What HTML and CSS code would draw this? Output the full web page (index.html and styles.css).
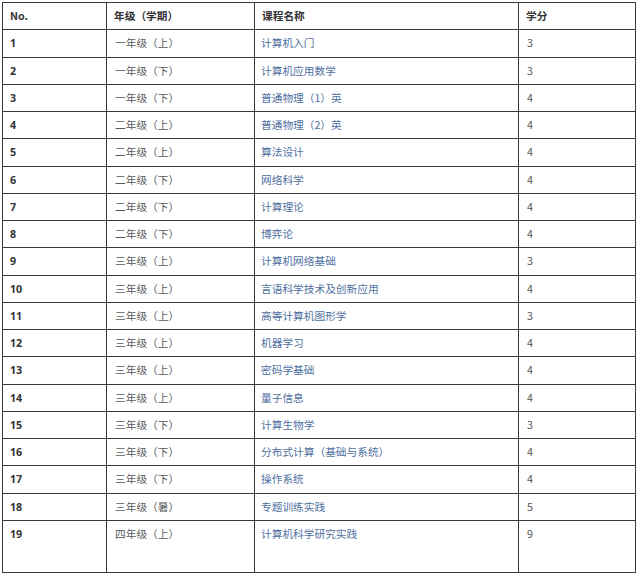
FILE: index.html
```html
<!DOCTYPE html>
<html lang="zh-CN">
<head>
<meta charset="utf-8">
<link rel="stylesheet" href="styles.css">
</head>
<body>
<table class="courses">
  <colgroup>
    <col class="c-no"><col class="c-grade"><col class="c-name"><col class="c-credit">
  </colgroup>
  <thead>
    <tr><th>No.</th><th>年级（学期）</th><th>课程名称</th><th>学分</th></tr>
  </thead>
  <tbody>
    <tr><td class="no">1</td><td class="grade">一年级（上）</td><td class="name">计算机入门</td><td class="credit">3</td></tr>
    <tr><td class="no">2</td><td class="grade">一年级（下）</td><td class="name">计算机应用数学</td><td class="credit">3</td></tr>
    <tr><td class="no">3</td><td class="grade">一年级（下）</td><td class="name">普通物理（1）英</td><td class="credit">4</td></tr>
    <tr><td class="no">4</td><td class="grade">二年级（上）</td><td class="name">普通物理（2）英</td><td class="credit">4</td></tr>
    <tr><td class="no">5</td><td class="grade">二年级（上）</td><td class="name">算法设计</td><td class="credit">4</td></tr>
    <tr><td class="no">6</td><td class="grade">二年级（下）</td><td class="name">网络科学</td><td class="credit">4</td></tr>
    <tr><td class="no">7</td><td class="grade">二年级（下）</td><td class="name">计算理论</td><td class="credit">4</td></tr>
    <tr><td class="no">8</td><td class="grade">二年级（下）</td><td class="name">博弈论</td><td class="credit">4</td></tr>
    <tr><td class="no">9</td><td class="grade">三年级（上）</td><td class="name">计算机网络基础</td><td class="credit">3</td></tr>
    <tr><td class="no">10</td><td class="grade">三年级（上）</td><td class="name">言语科学技术及创新应用</td><td class="credit">4</td></tr>
    <tr><td class="no">11</td><td class="grade">三年级（上）</td><td class="name">高等计算机图形学</td><td class="credit">3</td></tr>
    <tr><td class="no">12</td><td class="grade">三年级（上）</td><td class="name">机器学习</td><td class="credit">4</td></tr>
    <tr><td class="no">13</td><td class="grade">三年级（上）</td><td class="name">密码学基础</td><td class="credit">4</td></tr>
    <tr><td class="no">14</td><td class="grade">三年级（上）</td><td class="name">量子信息</td><td class="credit">4</td></tr>
    <tr><td class="no">15</td><td class="grade">三年级（下）</td><td class="name">计算生物学</td><td class="credit">3</td></tr>
    <tr><td class="no">16</td><td class="grade">三年级（下）</td><td class="name">分布式计算（基础与系统）</td><td class="credit">4</td></tr>
    <tr><td class="no">17</td><td class="grade">三年级（下）</td><td class="name">操作系统</td><td class="credit">4</td></tr>
    <tr><td class="no">18</td><td class="grade">三年级（暑）</td><td class="name">专题训练实践</td><td class="credit">5</td></tr>
    <tr class="last"><td class="no">19</td><td class="grade">四年级（上）</td><td class="name">计算机科学研究实践</td><td class="credit">9</td></tr>
  </tbody>
</table>
</body>
</html>
```

FILE: styles.css
```css
html, body {
  margin: 0;
  padding: 0;
  background: #ffffff;
}

body {
  padding: 2px 0 0 2px;
  font-family: "Noto Sans CJK SC", "Noto Sans", sans-serif;
  font-size: 10.7px;
}

.courses {
  border-collapse: collapse;
  table-layout: fixed;
  width: 633px;
}

.c-no { width: 104px; }
.c-grade { width: 148px; }
.c-name { width: 264px; }
.c-credit { width: 117px; }

.courses th,
.courses td {
  border: 1px solid #3a3a3a;
  height: 26.25px;
  padding: 0 7px;
  text-align: left;
  vertical-align: middle;
  line-height: 16px;
  white-space: nowrap;
}

.courses th {
  font-weight: bold;
  color: #333333;
}

.courses td.no {
  font-weight: bold;
  color: #333333;
  font-family: "Open Sans", "Noto Sans CJK SC", sans-serif;
}

.courses td.grade {
  color: #595959;
  padding-left: 8px;
}

.courses td.name {
  color: #4f6f9f;
  padding-left: 6px;
}

.courses td.credit {
  color: #555555;
  padding-left: 8px;
}

.courses tr.last td {
  height: 46px;
  vertical-align: top;
  padding-top: 5px;
}
```
